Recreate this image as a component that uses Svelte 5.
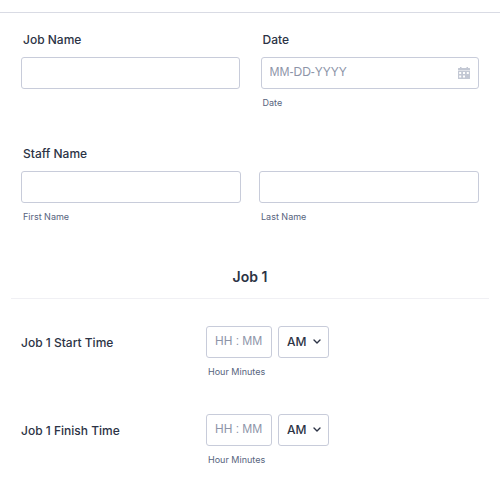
<script>
  const jobs = [
    { id: 'start', label: 'Job 1 Start Time' },
    { id: 'finish', label: 'Job 1 Finish Time' }
  ];
</script>

<form class="form">
  <div class="row wide">
    <div class="field">
      <label class="label" for="job-name">Job Name</label>
      <input id="job-name" type="text" />
    </div>
    <div class="field">
      <label class="label" for="date">Date</label>
      <div class="date">
        <input id="date" type="text" placeholder="MM-DD-YYYY" />
        <button type="button" aria-label="Choose date">
          <svg viewBox="0 0 12 12" width="12" height="12">
            <path
              fill="currentColor"
              fill-rule="evenodd"
              d="M2 0h1.500v1h5V0H10v1h1.500a.5.5 0 0 1 .5.5V3H0V1.500A.5.5 0 0 1 .5 1H2zM0 3.500h12v8a.5.5 0 0 1-.5.5H.5a.5.5 0 0 1-.5-.5zM1.200 5v2h2V5zM5 5v2h2V5zM8.800 5v2h2V5zM1.200 8.500v2h2v-2zM5 8.500v2h2v-2z"
            />
          </svg>
        </button>
      </div>
      <label class="sub" for="date">Date</label>
    </div>
  </div>

  <fieldset class="staff">
    <legend class="label">Staff Name</legend>
    <div class="row">
      <div class="field">
        <input id="first" type="text" />
        <label class="sub" for="first">First Name</label>
      </div>
      <div class="field">
        <input id="last" type="text" />
        <label class="sub" for="last">Last Name</label>
      </div>
    </div>
  </fieldset>

  <h2>Job 1</h2>

  {#each jobs as job}
    <div class="time-row">
      <label class="time-label" for="{job.id}-time">{job.label}</label>
      <div>
        <div class="controls">
          <input class="time" id="{job.id}-time" type="text" placeholder="HH : MM" />
          <div class="period">
            <select aria-label="{job.label} AM or PM">
              <option>AM</option>
              <option>PM</option>
            </select>
            <svg viewBox="0 0 8 5" width="8" height="5">
              <path d="M1 1 4 4 7 1" fill="none" stroke="currentColor" stroke-width="1.400" stroke-linecap="round" stroke-linejoin="round" />
            </svg>
          </div>
        </div>
        <label class="sub" for="{job.id}-time">Hour Minutes</label>
      </div>
    </div>
  {/each}
</form>

<style>
  :global(body) {
    margin: 0;
    background: #fff;
  }
  .form {
    margin-top: 12px;
    border-top: 1px solid #d9dbe4;
    padding-top: 18px;
    font-family: Inter, 'Liberation Sans', sans-serif;
    color: #2c3345;
  }
  .row {
    display: flex;
    gap: 18px;
  }
  .wide {
    gap: 21px;
    padding: 0 21px;
  }
  .field {
    flex: 1;
    min-width: 0;
  }
  .label {
    display: block;
    padding: 0 2px;
    margin-bottom: 10px;
    font-size: 12px;
    line-height: 17px;
    margin-bottom: 9px;
    font-weight: 500;
  }
  input,
  select {
    box-sizing: border-box;
    display: block;
    width: 100%;
    height: 32px;
    margin: 0;
    padding: 0 8px 2px;
    border: 1px solid #c8ccda;
    border-radius: 3px;
    background: #fff;
    color: #2c3345;
    font: 400 12px/16px 'Liberation Sans', sans-serif;
  }
  input::placeholder {
    color: #8d94a8;
    opacity: 1;
  }
  .date {
    position: relative;
  }
  .date button {
    position: absolute;
    top: 0;
    right: 0;
    display: flex;
    align-items: center;
    height: 32px;
    padding: 0 9px;
    border: 0;
    background: none;
    color: #c3c8d4;
  }
  .sub {
    display: block;
    margin-top: 8px;
    padding: 0 2px;
    font-size: 9px;
    line-height: 12px;
    color: #57647e;
  }
  .staff {
    margin: 36px 0 0;
    padding: 0 21px;
    border: 0;
    min-width: 0;
  }
  h2 {
    margin: 45px 11px 0;
    padding-bottom: 12px;
    border-bottom: 1px solid #f0f0f4;
    font-size: 14px;
    line-height: 18px;
    font-weight: 600;
    text-align: center;
  }
  .time-row {
    display: flex;
    margin-top: 36px;
    padding: 0 21px;
  }
  h2 + .time-row {
    margin-top: 27px;
  }
  .time-label {
    width: 185px;
    padding-top: 8px;
    box-sizing: border-box;
    font-size: 12px;
    line-height: 17px;
    font-weight: 500;
  }
  .controls {
    display: flex;
    gap: 6px;
  }
  .time {
    width: 66px;
  }
  .period {
    position: relative;
    width: 51px;
  }
  select {
    appearance: none;
    padding: 0 8px;
    font-family: Inter, 'Liberation Sans', sans-serif;
    font-weight: 500;
  }
  .period svg {
    position: absolute;
    right: 8px;
    top: 13px;
    pointer-events: none;
  }
</style>
